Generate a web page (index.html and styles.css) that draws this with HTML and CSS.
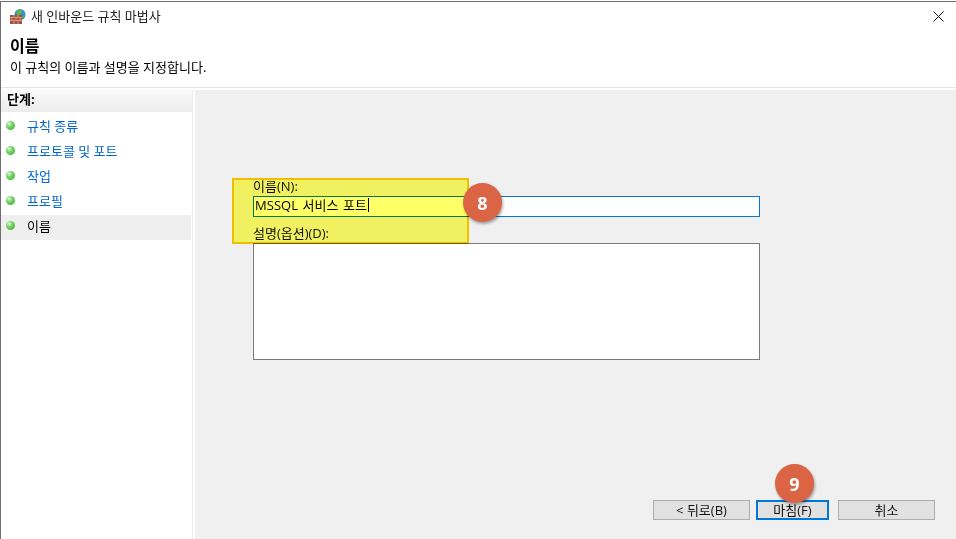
FILE: index.html
```html
<!DOCTYPE html>
<html lang="ko">
<head>
<meta charset="utf-8">
<title>새 인바운드 규칙 마법사</title>
<link rel="stylesheet" href="styles.css">
</head>
<body>
<div class="topstrip"></div>
<div class="window">
  <header class="titlebar">
    <svg class="appicon" width="16" height="15" viewBox="0 0 16 15">
      <circle cx="10" cy="5.5" r="5.5" fill="#2f8fd8"/>
      <path d="M6 2.5 Q9 -.5 12.5 1.5 L11 5 L8 7 Z" fill="#5cb84a"/>
      <path d="M11.5 7 L15.5 6 L13.5 10 Z" fill="#4fa84a"/>
      <rect x="0" y="6" width="12" height="9" fill="#a5503c"/>
      <path d="M0 8.5H12M0 11.5H12M4 6V8.5M8 6V8.5M2 8.5V11.5M6 8.5V11.5M10 8.5V11.5M4 11.5V15M8 11.5V15" stroke="#d49a84" stroke-width="1" fill="none"/>
    </svg>
    <span class="titletext">새 인바운드 규칙 마법사</span>
    <svg class="closeicon" width="11" height="11" viewBox="0 0 11 11">
      <path d="M.5 .5L10.5 10.5M10.5 .5L.5 10.5" stroke="#111" stroke-width="1" fill="none"/>
    </svg>
  </header>
  <section class="pagehead">
    <h1 class="pagetitle">이름</h1>
    <p class="pagedesc">이 규칙의 이름과 설명을 지정합니다.</p>
  </section>
  <div class="main">
    <nav class="steps">
      <div class="stepshead">단계:</div>
      <ul class="steplist">
        <li class="step"><i class="dot"></i><a class="steplink">규칙 종류</a></li>
        <li class="step"><i class="dot"></i><a class="steplink">프로토콜 및 포트</a></li>
        <li class="step"><i class="dot"></i><a class="steplink">작업</a></li>
        <li class="step"><i class="dot"></i><a class="steplink">프로필</a></li>
        <li class="step current"><i class="dot"></i><span>이름</span></li>
      </ul>
    </nav>
    <main class="content">
      <form class="form">
        <label class="fieldlabel">이름(N):</label>
        <div class="textinput">MSSQL 서비스 포트<span class="caret"></span></div>
        <label class="fieldlabel second">설명(옵션)(D):</label>
        <div class="textarea"></div>
      </form>
      <div class="buttons">
        <button class="btn back" type="button">&lt; 뒤로(B)</button>
        <button class="btn finish" type="button">마침(F)</button>
        <button class="btn cancel" type="button">취소</button>
      </div>
    </main>
  </div>
</div>
<div class="highlight"></div>
<div class="badge badge8">8</div>
<div class="badge badge9">9</div>
</body>
</html>
```
FILE: styles.css
```css
* { box-sizing: border-box; }
html, body { margin: 0; padding: 0; }
body {
  width: 956px;
  height: 539px;
  overflow: hidden;
  position: relative;
  background: #fff;
  font-family: "Open Sans", "Noto Sans CJK KR", sans-serif;
  font-size: 13px;
  color: #000;
  display: flex;
  flex-direction: column;
}
.topstrip { height: 1px; background: #fff; flex: none; }
.window {
  flex: 1;
  display: flex;
  flex-direction: column;
  border-top: 1px solid #6e6e6e;
  border-left: 1px solid #6e6e6e;
  min-height: 0;
}
.titlebar {
  height: 28px;
  flex: none;
  display: flex;
  align-items: center;
  padding: 0 12px 0 9px;
}
.appicon { flex: none; margin-right: 5px; }
.titletext { flex: 1; line-height: 16px; color: #222; }
.closeicon { flex: none; }
.pagehead {
  height: 58px;
  flex: none;
  padding: 6px 0 0 9px;
  border-bottom: 1px solid #e6e6e6;
}
.pagetitle { margin: 0; font-size: 16px; line-height: 20px; font-weight: 700; }
.pagedesc { margin: 3px 0 0; line-height: 16px; }
.main { flex: 1; display: flex; min-height: 0; padding-top: 2px; }
.steps {
  width: 192px;
  flex: none;
  background: #fff;
  border-right: 1px solid #eee;
}
.stepshead {
  height: 22px;
  padding: 1px 0 0 6px;
  font-weight: 700;
  line-height: 16px;
  background: linear-gradient(#fafafa, #ececec);
}
.steplist { list-style: none; margin: 0; padding: 3px 0 0; }
.step {
  height: 25px;
  display: flex;
  align-items: center;
  padding: 0 0 4px 5px;
  line-height: 16px;
  margin-right: 1px;
}
.step.current { background: #efefef; }
.dot {
  width: 9px;
  height: 9px;
  border-radius: 50%;
  background: radial-gradient(circle at 35% 30%, #e4f5e0 0, #6fd260 40%, #3cae2c 100%);
  margin-right: 12px;
  flex: none;
}
.steplink { color: #0066cc; }
.content {
  flex: 1;
  margin-left: 2px;
  background: #f0f0f0;
  display: flex;
  flex-direction: column;
  justify-content: space-between;
  padding: 88px 20px 19px 58px;
}
.form { width: 507px; }
.fieldlabel { display: block; line-height: 16px; height: 16px; color: #111; }
.fieldlabel.second { margin-top: 8px; }
.textinput {
  height: 21px;
  margin-top: 2px;
  border: 1px solid #0078d7;
  background: #fff;
  padding: 0 0 3px 1px;
  line-height: 16px;
  word-spacing: 1px;
  letter-spacing: .05px;
  display: flex;
  align-items: center;
}
.caret { width: 1px; height: 14px; background: #000; margin-left: 1px; }
.textarea {
  height: 117px;
  margin-top: 2px;
  border: 1px solid #7a7a7a;
  background: #fff;
}
.buttons { display: flex; }
.btn {
  height: 20px;
  padding: 0;
  font: inherit;
  line-height: 16px;
  color: #111;
  background: #e1e1e1;
  border: 1px solid #adadad;
}
.back { width: 97px; margin-left: 400px; margin-right: 6px; }
.finish { width: 73px; border: 2px solid #0078d7; margin-right: 9px; }
.cancel { width: 97px; }
.highlight {
  position: absolute;
  left: 232px;
  top: 178px;
  width: 237px;
  height: 66px;
  background: #ffff66;
  border: 2px solid #ffcc00;
  mix-blend-mode: multiply;
}
.badge {
  position: absolute;
  width: 39px;
  height: 39px;
  border-radius: 50%;
  background: #db6445;
  color: #fff;
  font-family: "Noto Sans", sans-serif;
  font-weight: 700;
  font-size: 18px;
  display: flex;
  align-items: center;
  justify-content: center;
  box-shadow: 1px 2px 3px rgba(0,0,0,.35);
}
.badge8 { left: 463px; top: 183px; }
.badge9 { left: 775px; top: 464px; }
```
